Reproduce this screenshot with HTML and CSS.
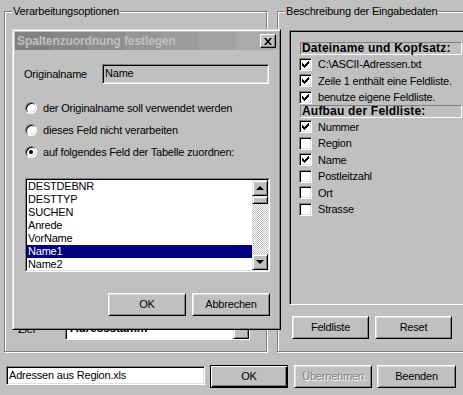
FILE: index.html
```html
<!DOCTYPE html>
<html>
<head>
<meta charset="utf-8">
<link rel="stylesheet" href="styles.css">
</head>
<body>
<div class="groups">
  <div class="group group-left">
    <span class="group-label">Verarbeitungsoptionen</span>
    <div class="ziel-row">
      <span class="ziel-label">Ziel</span>
      <div class="combo">
        <span class="combo-text">Adressstamm</span>
        <span class="combo-btn"><span class="arrow-down"></span></span>
      </div>
    </div>
  </div>
  <div class="group group-right">
    <span class="group-label">Beschreibung der Eingabedaten</span>
    <div class="panel">
      <div class="hdr">Dateiname und Kopfsatz:</div>
      <div class="row"><span class="cb"><svg class="check" width="9" height="9" viewBox="0 0 9 9"><path d="M1 3h1v3H1zM2 4h1v3H2zM3 5h1v3H3zM4 4h1v3H4zM5 3h1v3H5zM6 2h1v3H6zM7 1h1v3H7z"/></svg></span>C:\ASCII-Adressen.txt</div>
      <div class="row"><span class="cb"><svg class="check" width="9" height="9" viewBox="0 0 9 9"><path d="M1 3h1v3H1zM2 4h1v3H2zM3 5h1v3H3zM4 4h1v3H4zM5 3h1v3H5zM6 2h1v3H6zM7 1h1v3H7z"/></svg></span>Zeile 1 enthält eine Feldliste.</div>
      <div class="row"><span class="cb"><svg class="check" width="9" height="9" viewBox="0 0 9 9"><path d="M1 3h1v3H1zM2 4h1v3H2zM3 5h1v3H3zM4 4h1v3H4zM5 3h1v3H5zM6 2h1v3H6zM7 1h1v3H7z"/></svg></span>benutze eigene Feldliste.</div>
      <div class="hdr hdr2">Aufbau der Feldliste:</div>
      <div class="row"><span class="cb"><svg class="check" width="9" height="9" viewBox="0 0 9 9"><path d="M1 3h1v3H1zM2 4h1v3H2zM3 5h1v3H3zM4 4h1v3H4zM5 3h1v3H5zM6 2h1v3H6zM7 1h1v3H7z"/></svg></span>Nummer</div>
      <div class="row"><span class="cb"></span>Region</div>
      <div class="row"><span class="cb"><svg class="check" width="9" height="9" viewBox="0 0 9 9"><path d="M1 3h1v3H1zM2 4h1v3H2zM3 5h1v3H3zM4 4h1v3H4zM5 3h1v3H5zM6 2h1v3H6zM7 1h1v3H7z"/></svg></span>Name</div>
      <div class="row"><span class="cb"></span>Postleitzahl</div>
      <div class="row"><span class="cb"></span>Ort</div>
      <div class="row"><span class="cb"></span>Strasse</div>
    </div>
    <div class="grp-buttons">
      <button class="btn">Feldliste</button>
      <button class="btn">Reset</button>
    </div>
  </div>
</div>
<div class="bottom-row">
  <div class="file-input">Adressen aus Region.xls</div>
  <button class="btn btn-default btn-ok">OK</button>
  <button class="btn btn-disabled btn-apply">Übernehmen</button>
  <button class="btn btn-end">Beenden</button>
</div>

<div class="dialog">
  <div class="titlebar">
    <span class="title">Spaltenzuordnung festlegen</span>
    <span class="close"><svg width="8" height="7" viewBox="0 0 8 7"><path d="M0 0h2l2 2.2L6 0h2L5 3.5 8 7H6L4 4.8 2 7H0l3-3.5z"/></svg></span>
  </div>
  <div class="dlg-body">
    <div class="orig-row">
      <span class="orig-label">Originalname</span>
      <div class="orig-input">Name</div>
    </div>
    <div class="radio-row first"><span class="radio"></span>der Originalname soll verwendet werden</div>
    <div class="radio-row"><span class="radio"></span>dieses Feld nicht verarbeiten</div>
    <div class="radio-row"><span class="radio on"></span>auf folgendes Feld der Tabelle zuordnen:</div>
    <div class="listbox">
      <div class="listbox-inner">
        <div class="items">
          <div class="item">DESTDEBNR</div>
          <div class="item">DESTTYP</div>
          <div class="item">SUCHEN</div>
          <div class="item">Anrede</div>
          <div class="item">VorName</div>
          <div class="item selected">Name1</div>
          <div class="item">Name2</div>
        </div>
        <div class="scrollbar">
          <span class="sb-btn"><span class="arrow-up"></span></span>
          <span class="sb-thumb"></span>
          <span class="sb-track"></span>
          <span class="sb-btn"><span class="arrow-down"></span></span>
        </div>
      </div>
    </div>
    <div class="dlg-buttons">
      <button class="btn">OK</button>
      <button class="btn">Abbrechen</button>
    </div>
  </div>
</div>
</body>
</html>
```

FILE: styles.css
```css
* { box-sizing: border-box; }
html, body { margin: 0; padding: 0; }
body {
  width: 463px;
  height: 395px;
  overflow: hidden;
  position: relative;
  background: #c0c0c0;
  font-family: "Liberation Sans", Arial, sans-serif;
  font-size: 11px;
  letter-spacing: -0.2px;
  color: #000;
}

/* ---------- group boxes ---------- */
.groups {
  display: flex;
  gap: 10px;
  padding: 11px 0 0 4px;
  height: 352px;
}
.group {
  flex-shrink: 0;
  height: 341px;
  border: 1px solid #808080;
  box-shadow: inset 1px 1px 0 #fff, 1px 1px 0 #fff;
  display: flex;
  flex-direction: column;
}
.group-left { width: 263px; }
.group-right { width: 200px; }
.group-label {
  align-self: flex-start;
  margin: -7px 0 0 7px;
  padding: 0 1px;
  background: #c0c0c0;
  line-height: 13px;
  white-space: nowrap;
}

/* left group, mostly hidden */
.ziel-row {
  margin-top: auto;
  display: flex;
  align-items: flex-end;
  padding: 0 0 11px 13px;
}
.ziel-label { width: 47px; line-height: 13px; margin-bottom: 4px; }
.combo {
  width: 185px;
  height: 21px;
  border: 1px solid;
  border-color: #808080 #fff #fff #808080;
  display: flex;
}
.combo-text {
  flex: 1;
  background: #fff;
  border-top: 1px solid #000;
  border-left: 1px solid #000;
  font-weight: bold;
  font-size: 12px;
  line-height: 14px;
  padding: 0 0 0 3px;
}
.combo-btn {
  width: 16px;
  border: 1px solid;
  border-color: #dfdfdf #000 #000 #dfdfdf;
  box-shadow: inset 1px 1px #fff, inset -1px -1px #808080;
  display: flex;
  align-items: flex-start;
  justify-content: center;
  padding-top: 4px;
}

/* right group */
.panel {
  margin: 12px 0 0 11px;
  width: 185px;
  height: 275px;
  border: 1px solid;
  border-color: #808080 #fff #fff #808080;
  box-shadow: inset 1px 1px 0 #000;
  padding: 11px 0 0 9px;
}
.hdr {
  width: 162px;
  height: 13px;
  margin-left: 1px;
  margin-bottom: 1px;
  border: 1px solid;
  border-color: #808080 #fff #fff #808080;
  font-weight: bold;
  font-size: 12px;
  letter-spacing: 0.2px;
  line-height: 11px;
  padding-left: 1px;
  white-space: nowrap;
}
.hdr2 { margin-top: -1px; }
.row {
  height: 16.5px;
  display: flex;
  align-items: center;
  white-space: nowrap;
}
.cb {
  width: 13px;
  height: 13px;
  flex-shrink: 0;
  margin-right: 6px;
  background: #fff;
  border: 1px solid;
  border-color: #808080 #fff #fff #808080;
  box-shadow: inset 1px 1px 0 #000, inset -1px -1px 0 #dfdfdf;
  padding: 1px 0 0 1px;
  display: flex;
}
.check { display: block; fill: #000; shape-rendering: crispEdges; }

.grp-buttons {
  display: flex;
  gap: 6px;
  margin: 11px 0 0 14px;
}
.grp-buttons .btn { width: 77px; }

/* ---------- buttons ---------- */
.btn {
  height: 23px;
  width: 78px;
  padding: 0;
  margin: 0;
  background: #c0c0c0;
  font-family: inherit;
  font-size: 11px;
  letter-spacing: -0.2px;
  color: #000;
  border: 1px solid;
  border-color: #fff #000 #000 #fff;
  box-shadow: inset 1px 1px 0 #dfdfdf, inset -1px -1px 0 #808080;
  border-radius: 0;
  text-align: center;
  line-height: 19px;
  flex-shrink: 0;
}
.btn-default {
  border-color: #000;
  box-shadow: inset 1px 1px 0 #fff, inset -1px -1px 0 #000, inset -2px -2px 0 #808080;
}
.btn-disabled {
  color: #808080;
  text-shadow: 1px 1px 0 #fff;
}

/* ---------- bottom row ---------- */
.bottom-row {
  display: flex;
  align-items: flex-start;
  padding: 13px 0 0 6px;
}
.file-input {
  width: 199px;
  height: 19px;
  margin-top: 1px;
  background: #fff;
  border: 1px solid;
  border-color: #808080 #fff #fff #808080;
  box-shadow: inset 1px 1px 0 #000, inset -1px -1px 0 #dfdfdf;
  padding: 0 0 0 2px;
  line-height: 17px;
  white-space: nowrap;
}
.btn-ok { margin-left: 5px; }
.btn-apply { margin-left: 6px; }
.btn-end { margin-left: 5px; width: 79px; }

/* ---------- dialog ---------- */
.dialog {
  position: absolute;
  left: 12px;
  top: 29px;
  width: 269px;
  height: 301px;
  background: #c0c0c0;
  border: 1px solid;
  border-color: #dfdfdf #000 #000 #dfdfdf;
  box-shadow: inset 1px 1px 0 #fff, inset -1px -1px 0 #808080;
  padding: 2px;
}
.titlebar {
  height: 18px;
  display: flex;
  align-items: center;
  justify-content: space-between;
  padding: 0 2px 0 2px;
  background: linear-gradient(to right,
    #808080 0 37px, #878787 37px 73px, #8e8e8e 73px 110px, #959595 110px 147px,
    #9c9c9c 147px 184px, #a3a3a3 184px 221px, #aaaaaa 221px 258px, #b1b1b1 258px);
}
.title {
  color: #c0c0c0;
  font-weight: bold;
  font-size: 12px;
  letter-spacing: -0.1px;
  white-space: nowrap;
}
.close {
  width: 16px;
  height: 14px;
  background: #c0c0c0;
  border: 1px solid;
  border-color: #fff #000 #000 #fff;
  box-shadow: inset -1px -1px 0 #808080;
  display: flex;
  align-items: center;
  justify-content: center;
  padding-right: 1px;
}
.close svg { display: block; fill: #000; }

.dlg-body {
  padding: 0 8px 0 9px;
}
.orig-row {
  display: flex;
  align-items: center;
  margin-top: 14px;
  height: 20px;
}
.orig-label { width: 78px; }
.orig-input {
  width: 167px;
  height: 20px;
  border: 1px solid;
  border-color: #808080 #fff #fff #808080;
  box-shadow: inset 1px 1px 0 #000, inset -1px -1px 0 #dfdfdf;
  padding-left: 2px;
  line-height: 17px;
}
.radio-row {
  height: 22px;
  display: flex;
  align-items: center;
  white-space: nowrap;
}
.radio-row.first { margin-top: 13px; }
.radio {
  width: 12px;
  height: 12px;
  margin: 0 6px 0 1px;
  border-radius: 50%;
  background: #fff;
  border: 1px solid;
  border-color: #808080 #fff #fff #808080;
  box-shadow: inset 1px 1px 0 #000, inset -1px -1px 0 #dfdfdf;
  display: flex;
  align-items: center;
  justify-content: center;
  flex-shrink: 0;
}
.radio.on::after {
  content: "";
  width: 4px;
  height: 4px;
  border-radius: 50%;
  background: #000;
}

.listbox {
  margin: 15px 0 0 1px;
  width: 245px;
  height: 94px;
  border: 1px solid;
  border-color: #808080 #fff #fff #808080;
}
.listbox-inner {
  height: 100%;
  border: 1px solid;
  border-color: #000 #dfdfdf #dfdfdf #000;
  display: flex;
  background: #fff;
}
.items { flex: 1; overflow: hidden; }
.item {
  height: 13px;
  line-height: 13px;
  padding-left: 1px;
  white-space: nowrap;
}
.item.selected { background: #000080; color: #fff; }
.scrollbar {
  width: 16px;
  display: flex;
  flex-direction: column;
}
.sb-btn, .sb-thumb {
  background: #c0c0c0;
  border: 1px solid;
  border-color: #dfdfdf #000 #000 #dfdfdf;
  box-shadow: inset 1px 1px 0 #fff, inset -1px -1px 0 #808080;
}
.sb-btn {
  height: 16px;
  display: flex;
  align-items: center;
  justify-content: center;
  flex-shrink: 0;
}
.sb-thumb { height: 8px; flex-shrink: 0; }
.sb-track {
  flex: 1;
  background: repeating-conic-gradient(#fff 0 25%, #c0c0c0 0 50%) 0 0 / 2px 2px;
}
.arrow-up {
  width: 0; height: 0;
  border-left: 4px solid transparent;
  border-right: 4px solid transparent;
  border-bottom: 4px solid #000;
}
.arrow-down {
  width: 0; height: 0;
  border-left: 4px solid transparent;
  border-right: 4px solid transparent;
  border-top: 4px solid #000;
}

.dlg-buttons {
  display: flex;
  justify-content: flex-end;
  gap: 6px;
  margin-top: 21px;
}
```
